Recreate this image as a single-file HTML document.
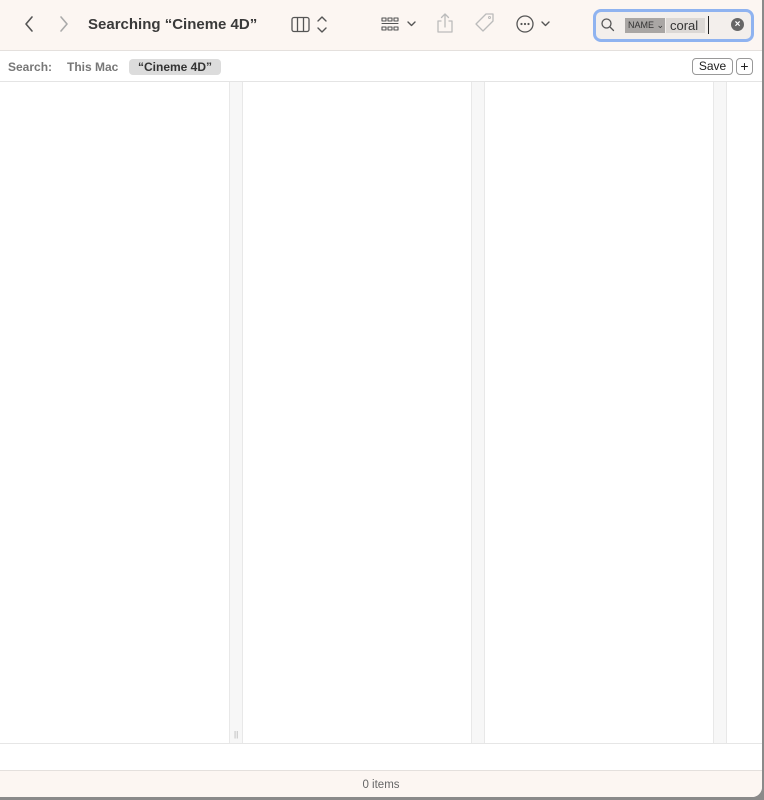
<!DOCTYPE html>
<html><head><style>
body{margin:0;width:764px;height:800px;background:#8a8a8a;font-family:"Liberation Sans",sans-serif;overflow:hidden;position:relative}
.win{position:absolute;left:0;top:0;width:762px;height:797px;background:#fff;border-radius:0 0 10px 0;overflow:hidden}
.tb{position:absolute;left:0;top:0;width:762px;height:50px;background:#fcf6f2;border-bottom:1px solid #e4e0dd}
.t{position:absolute;font-size:15px;font-weight:bold;color:#3a3a3a;left:88px;top:16px}
.sb{position:absolute;top:51px;height:30px;width:762px;border-bottom:1px solid #e4e4e4;background:#fff}
.col{position:absolute;top:82px;height:661px;width:12px;background:#f7f7f7;border-left:1px solid #e8e8e8;border-right:1px solid #e8e8e8}
.foot{position:absolute;top:743px;height:27px;width:762px;border-top:1px solid #e6e6e6;background:#fff}
.st{position:absolute;top:770px;height:27px;width:762px;background:#fcf6f2;border-top:1px solid #e4e0dd;font-size:11.5px;color:#666;text-align:center;line-height:28px}
svg{position:absolute}
</style></head><body>
<div class="win">
<div class="tb">
<svg width="764" height="50" viewBox="0 0 764 50" fill="none" stroke-linecap="round" stroke-linejoin="round">
<path d="M32 17l-6 7 6 7" stroke="#555" stroke-width="1.6"/>
<path d="M61 17l6 7-6 7" stroke="#aaa" stroke-width="1.6"/>
<rect x="292" y="17.5" width="17" height="14" rx="2" stroke="#555" stroke-width="1.3"/>
<path d="M297.5 18v13M303.5 18v13" stroke="#555" stroke-width="1.3"/>
<path d="M318 21l4-4 4 4M318 28l4 4 4-4" stroke="#555" stroke-width="1.4"/>
<g stroke="#555" stroke-width="1.1"><rect x="382" y="18" width="4" height="3"/><rect x="388" y="18" width="4" height="3"/><rect x="394" y="18" width="4" height="3"/><rect x="382" y="27" width="4" height="3"/><rect x="388" y="27" width="4" height="3"/><rect x="394" y="27" width="4" height="3"/><path d="M382 23.5h16"/></g>
<path d="M408 22l3.5 3.5 3.5-3.5" stroke="#555" stroke-width="1.4"/>
<path d="M441 21h-3v11h14v-11h-3M445 27v-13M441.5 17.5l3.5-3.5 3.5 3.5" stroke="#bbb" stroke-width="1.3"/>
<path d="M476 24l10-10h7v7l-10 10z" stroke="#bbb" stroke-width="1.3"/><circle cx="489.5" cy="17.5" r="1" stroke="#bbb"/>
<circle cx="525" cy="24" r="8" stroke="#555" stroke-width="1.3"/>
<g fill="#555" stroke="none"><circle cx="521.5" cy="24" r="1.1"/><circle cx="525" cy="24" r="1.1"/><circle cx="528.5" cy="24" r="1.1"/></g>
<path d="M542 22l3.5 3.5 3.5-3.5" stroke="#555" stroke-width="1.4"/>
</svg>
<div class="t">Searching “Cineme 4D”</div>
<div style="position:absolute;left:593px;top:9px;width:155px;height:27px;border:3px solid #8fb3f0;border-radius:8px;background:#f3efec"></div>
<svg width="20" height="20" style="left:599px;top:16px" fill="none" stroke="#555" stroke-width="1.3"><circle cx="7.5" cy="7.5" r="4.5"/><path d="M11 11l3.5 3.5" stroke-linecap="round"/></svg>
<div style="position:absolute;left:625px;top:18px;width:40px;height:15px;background:#a9a6a4;font-size:9px;color:#333;line-height:15px;padding-left:3px;box-sizing:border-box">NAME ⌄</div>
<div style="position:absolute;left:666px;top:18px;width:39px;height:15px;background:#dcd8d5;font-size:13px;color:#333;line-height:15px;padding-left:4px;box-sizing:border-box">coral</div>
<div style="position:absolute;left:708px;top:16px;width:1px;height:18px;background:#222"></div>
<div style="position:absolute;left:731px;top:18px;width:13px;height:13px;border-radius:50%;background:#666;color:#fff;font-size:10px;line-height:13px;text-align:center;font-weight:bold">×</div>
</div>
<div class="sb">
<span style="position:absolute;left:8px;top:9px;font-size:12px;font-weight:bold;color:#777">Search:</span>
<span style="position:absolute;left:67px;top:9px;font-size:12px;font-weight:bold;color:#777">This Mac</span>
<span style="position:absolute;left:129px;top:8px;width:92px;height:16px;background:#dcdcdc;border-radius:4px;font-size:12px;font-weight:bold;color:#333;line-height:16px;text-align:center">“Cineme 4D”</span>
<span style="position:absolute;left:692px;top:7px;width:39px;height:15px;border:1px solid #999;border-radius:4px;font-size:12px;color:#222;line-height:15px;text-align:center">Save</span>
<span style="position:absolute;left:736px;top:7px;width:15px;height:15px;border:1px solid #999;border-radius:4px;font-size:14px;color:#222;line-height:14px;text-align:center">+</span>
</div>
<div class="col" style="left:229px"><div style="position:absolute;left:4px;bottom:4px;font-size:8px;color:#aaa">||</div></div>
<div class="col" style="left:471px"></div>
<div class="col" style="left:713px"></div>
<div class="foot"></div>
<div class="st">0 items</div>
</div>
</body></html>
